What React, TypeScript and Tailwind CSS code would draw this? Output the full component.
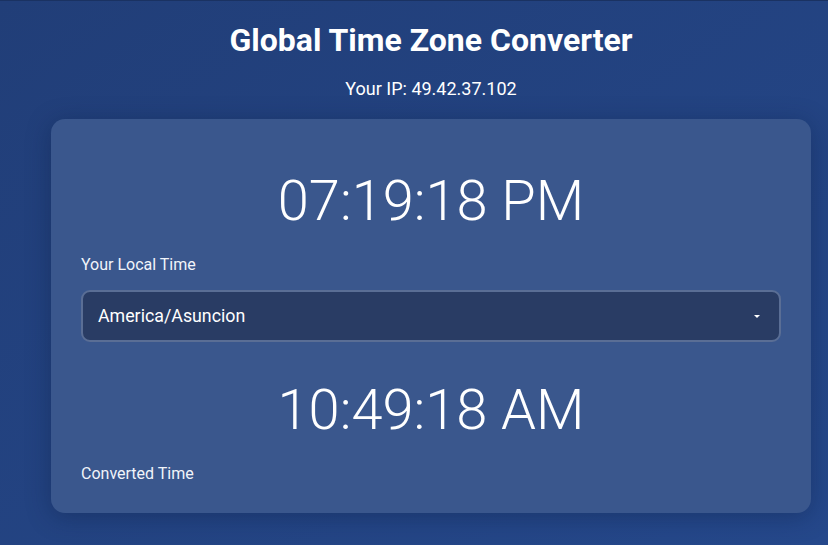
import { useState } from 'react';

const ZONES = ['America/Asuncion', 'Europe/London', 'Asia/Tokyo', 'America/New_York'];

export default function App() {
  const [zone] = useState(ZONES[0]);

  return (
    <div
      className="min-h-[545px] w-full overflow-hidden border-t border-[#1a3262] bg-gradient-to-br from-[#213e78] to-[#25488b] text-white"
      style={{ fontFamily: 'Roboto, "Noto Sans", sans-serif' }}
    >
      <div className="ml-[51px] w-[760px]">
        <header className="flex flex-col items-center pt-[20px]">
          <h1 className="text-[32px] leading-[38px] font-bold">Global Time Zone Converter</h1>
          <p className="mt-[18px] text-[18px] leading-[24px]">Your IP: 49.42.37.102</p>
        </header>

        <main className="mt-[18px] rounded-[14px] bg-[#3a578d] px-[30px] pt-[54px] pb-[28px] shadow-[0_4px_24px_rgba(10,25,60,0.35)]">
          <TimeBlock time="07:19:18 PM" />
          <div className="mt-[25px] text-[16px] leading-[22px] text-[#f1f4fa]">Your Local Time</div>

          <div className="mt-[14px] flex h-[52px] items-center justify-between rounded-[9px] border-2 border-[#5a6e95] bg-[#293c64] pr-[19px] pl-[15px]">
            <span className="text-[17.8px] text-white">{zone}</span>
            <span className="mt-[1px] h-0 w-0 border-x-[3px] border-t-[3px] border-x-transparent border-t-white" />
          </div>

          <div className="mt-[40px]">
            <TimeBlock time="10:49:18 AM" />
          </div>
          <div className="mt-[25px] text-[16px] leading-[22px] text-[#f1f4fa]">Converted Time</div>
        </main>
      </div>
    </div>
  );
}

function TimeBlock({ time }: { time: string }) {
  return <div className="text-center text-[56px] leading-[56px] font-light">{time}</div>;
}
